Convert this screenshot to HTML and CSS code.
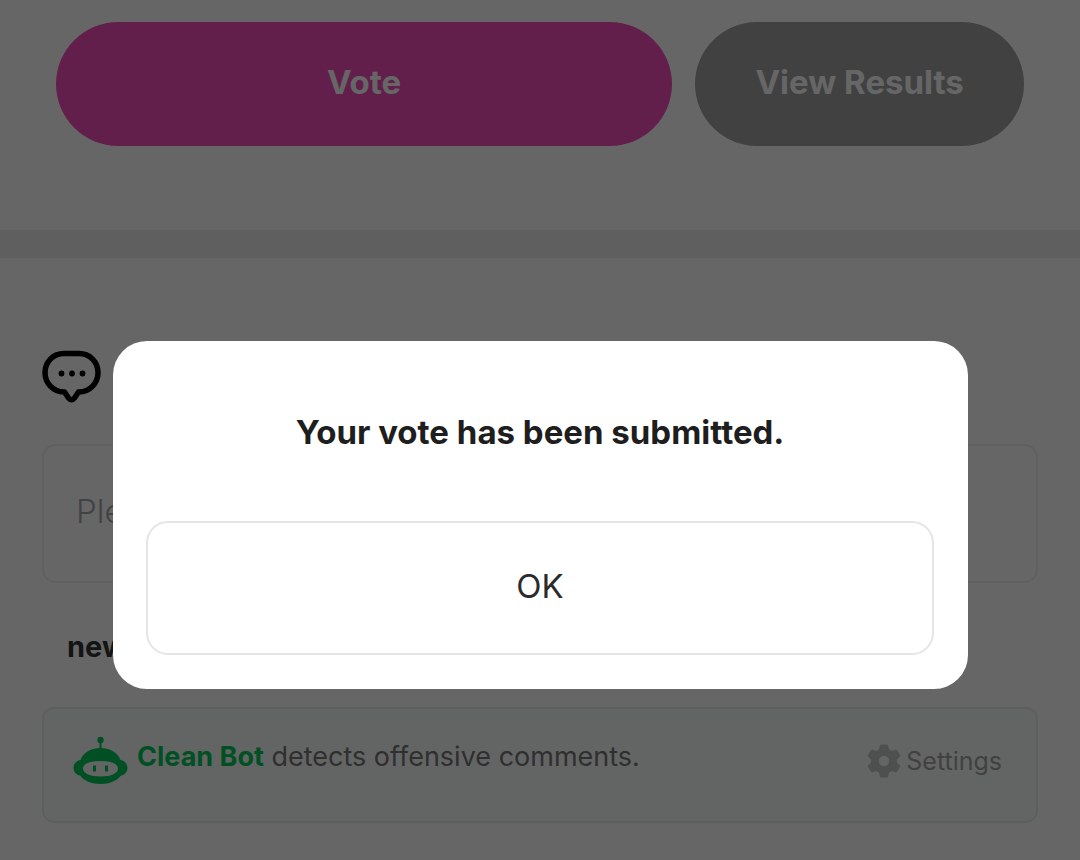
FILE: index.html
```
<!DOCTYPE html>
<html lang="en">
<head>
    <meta charset="UTF-8">
    <meta name="viewport" content="width=device-width, initial-scale=1.0">
    <title>Vote</title>
    <link rel="stylesheet" href="styles.css">
</head>
<body>
    <main>
        <section class="vote-actions">
            <button type="button" class="btn btn-vote">Vote</button>
            <button type="button" class="btn btn-results">View Results</button>
        </section>

        <section class="comments">
            <svg class="comment-icon" viewBox="0 0 60 54" aria-hidden="true">
                <path d="M22 3.500H37C48 3.500 56 12 56 22.500S48 42 37 42H36.500L32.500 48Q29.500 51.500 26.500 48L22.500 42H22C11 42 3 33 3 22.500S11 3.500 22 3.500Z" fill="none" stroke="#000" stroke-width="5.500" stroke-linejoin="round"/>
                <circle cx="19.500" cy="23.500" r="2.900"/>
                <circle cx="30" cy="23.500" r="2.900"/>
                <circle cx="40.500" cy="23.500" r="2.900"/>
            </svg>

            <input class="comment-input" type="text" placeholder="Ple" aria-label="Comment">

            <div class="sort">
                <button type="button" class="sort-btn">new</button>
            </div>

            <div class="cleanbot">
                <svg class="bot-icon" viewBox="0 0 56 50" aria-hidden="true">
                    <path fill="#03c75a" fill-rule="evenodd" d="M27.500 12C38 12 45 17 47.500 24C51.500 24.500 54.500 28 54.500 32S51.500 39 48 39.500C43.500 45 37 48 27.500 48S11.500 45 7 39.500C3.500 39 .5 36 .5 32S3.500 24.500 7.500 24C10 17 17 12 27.500 12ZM27.500 25C16.500 25 10 28 10 32.500S16.500 40.500 27.500 40.500S45 37 45 32.500S38.500 25 27.500 25Z"/>
                    <circle cx="27.500" cy="4" r="3.200" fill="#03c75a"/>
                    <path fill="#03c75a" d="M26.500 5h2v9h-2zM20 29.500h3v6h-3zM32 29.500h3v6h-3z"/>
                </svg>
                <p class="bot-text"><strong>Clean Bot</strong> detects offensive comments.</p>
                <button type="button" class="settings">
                    <svg class="gear-icon" viewBox="0 0 34 34" aria-hidden="true">
                        <path fill="#c4c6c5" fill-rule="evenodd" stroke="#c4c6c5" stroke-width="1" stroke-linejoin="round" d="M13.500 1H20.500L21.500 5.500L25 7.500L29.500 6L33 12L29.700 15.200V18.800L33 22L29.500 28L25 26.500L21.500 28.500L20.500 33H13.500L12.500 28.500L9 26.500L4.500 28L1 22L4.300 18.800V15.200L1 12L4.500 6L9 7.500L12.500 5.500ZM17 11.300A5.700 5.700 0 1 0 17 22.700A5.700 5.700 0 1 0 17 11.300Z"/>
                    </svg>
                    <span>Settings</span>
                </button>
            </div>
        </section>
    </main>

    <div class="overlay">
        <div class="dialog" role="alertdialog" aria-modal="true" aria-labelledby="dialogTitle">
            <h2 id="dialogTitle">Your vote has been submitted.</h2>
            <button type="button" class="btn-ok">OK</button>
        </div>
    </div>
</body>
</html>
```

FILE: styles.css
```
* {
    box-sizing: border-box;
}
body {
    margin: 0;
    background: #fff;
    color: #222;
    font-family: Inter, "Liberation Sans", sans-serif;
}
button,
input {
    font-family: inherit;
}
button {
    cursor: pointer;
}
.vote-actions {
    display: flex;
    gap: 23px;
    padding: 22px 56px 84px;
    border-bottom: 28px solid #eee;
}
.btn {
    height: 124px;
    padding: 0 0 4px;
    border: none;
    border-radius: 62px;
    color: #fff;
    font-size: 33px;
    font-weight: 700;
}
.btn-vote {
    flex: 15;
    background: #f84ebc;
}
.btn-results {
    flex: 8;
    background: #a2a2a2;
}
.comments {
    padding: 92px 42px 36px;
}
.comment-icon {
    display: block;
    width: 60px;
    height: 54px;
}
.comment-input {
    display: block;
    width: 100%;
    height: 139px;
    margin-top: 40px;
    padding: 0 32px 6px;
    border: 2px solid #f0f0f0;
    border-radius: 14px;
    background: #fff;
    font-size: 33px;
    font-weight: 300;
}
.comment-input::placeholder {
    color: #a5a5a5;
    opacity: 1;
}
.sort {
    display: flex;
    align-items: center;
    height: 124px;
    padding: 4px 25px 0;
}
.sort-btn {
    padding: 0;
    border: none;
    background: none;
    color: #333;
    font-size: 29px;
    font-weight: 700;
    line-height: 36px;
}
.cleanbot {
    display: flex;
    align-items: center;
    height: 116px;
    padding: 0 34px 8px 29px;
    border: 2px solid #e9eeec;
    border-radius: 12px;
    background: #f7fcfa;
}
.bot-icon {
    width: 56px;
    height: 50px;
}
.bot-text {
    flex: 1;
    margin: 0 0 8px 8px;
    color: #777;
    font-size: 27px;
    line-height: 36px;
}
.bot-text strong {
    color: #03c75a;
    font-weight: 700;
}
.settings {
    display: flex;
    align-items: center;
    gap: 5px;
    padding: 0;
    border: none;
    background: none;
    color: #a2a2a2;
    font-size: 25px;
}
.gear-icon {
    width: 34px;
    height: 34px;
}
.overlay {
    position: fixed;
    inset: 0;
    padding: 341px 112px 0 113px;
    background: rgba(0, 0, 0, 0.6);
}
.dialog {
    padding: 70px 34px 34px 33px;
    border-radius: 34px;
    background: #fff;
}
.dialog h2 {
    margin: 0 0 68px;
    color: #1e1e1e;
    font-size: 33px;
    font-weight: 700;
    line-height: 42px;
    text-align: center;
}
.btn-ok {
    display: block;
    width: 100%;
    height: 134px;
    padding: 0 0 4px;
    border: 2px solid #e5e5e5;
    border-radius: 22px;
    background: #fff;
    color: #2b2b2b;
    font-size: 33px;
}
```
